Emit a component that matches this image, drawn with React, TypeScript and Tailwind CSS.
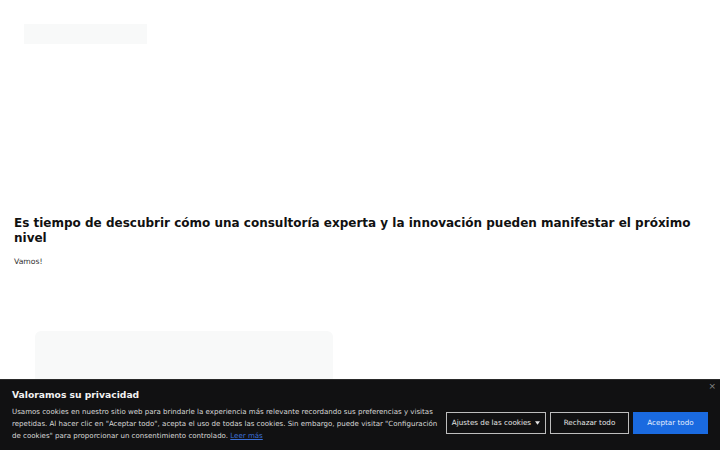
import React from "react";

export default function App() {
  return (
    <div className="relative w-[720px] h-[450px] overflow-hidden bg-white" style={{ fontFamily: '"DejaVu Sans", sans-serif' }}>
      <div className="pt-[24px] pl-[24px]">
        <div className="w-[123px] h-[20px] bg-[#f8f9f9]" />
      </div>
      <div className="px-[14px] pt-[172px]">
        <h1 className="text-[12px] leading-[15px] font-bold text-[#111]">
          Es tiempo de descubrir cómo una consultoría experta y la innovación pueden manifestar el próximo nivel
        </h1>
        <p className="mt-[10px] text-[7.7px] leading-[12px] text-[#333]">Vamos!</p>
      </div>
      <div className="pl-[35px] pt-[63px]">
        <div className="w-[298px] h-[120px] rounded-[6px] bg-[#f8f9f9]" />
      </div>

      <div className="absolute left-0 right-0 bottom-0 h-[71px] bg-[#111112] border-t border-[#2a2a2a] px-[12px] flex items-start">
        <div className="flex-1 pt-[8px]">
          <div className="text-[9.2px] leading-[14px] font-bold text-[#f2f2f2]">Valoramos su privacidad</div>
          <p className="mt-[4px] text-[7.05px] leading-[12px] text-[#d8d8d8] w-[428px]">
            Usamos cookies en nuestro sitio web para brindarle la experiencia más relevante recordando sus preferencias y visitas repetidas. Al hacer clic en "Aceptar todo", acepta el uso de todas las cookies. Sin embargo, puede visitar "Configuración de cookies" para proporcionar un consentimiento controlado.{" "}
            <span className="text-[#3b6fd6] underline">Leer más</span>
          </p>
        </div>
        <div className="flex gap-[4px] mt-[32px] mr-[0px]">
          <button className="w-[100px] h-[22px] border border-[#bdbdbd] text-[#e6e6e6] text-[7.2px] flex items-center justify-center gap-[4px]">
            Ajustes de las cookies
            <svg width="5" height="4" viewBox="0 0 6 4"><path d="M0 0h6L3 4z" fill="#e6e6e6" /></svg>
          </button>
          <button className="w-[79px] h-[22px] border border-[#bdbdbd] text-[#e6e6e6] text-[7.2px] flex items-center justify-center">
            Rechazar todo
          </button>
          <button className="w-[75px] h-[22px] bg-[#1a6ae0] text-[#e8f0ff] text-[7.2px] flex items-center justify-center">
            Aceptar todo
          </button>
        </div>
        <div className="absolute right-[4px] top-[1px] text-[9px] leading-[10px] text-[#888]">×</div>
      </div>
    </div>
  );
}
